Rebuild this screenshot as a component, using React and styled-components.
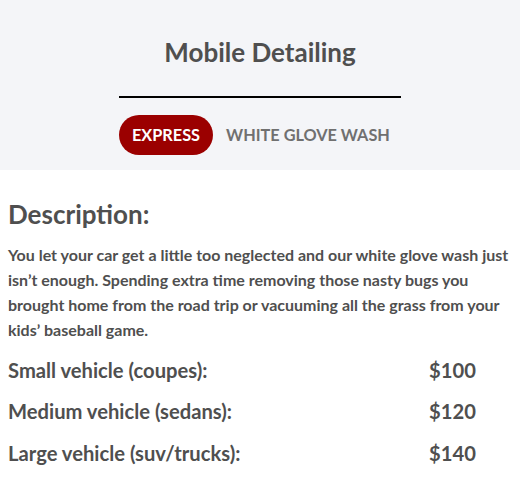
import React from 'react';
import styled, { createGlobalStyle } from 'styled-components';

const GlobalStyle = createGlobalStyle`
  body {
    margin: 0;
    background: #fff;
    font-family: Lato, 'Open Sans', sans-serif;
  }
`;

const prices = [
  { label: 'Small vehicle (coupes):', price: '$100' },
  { label: 'Medium vehicle (sedans):', price: '$120' },
  { label: 'Large vehicle (suv/trucks):', price: '$140' },
];

class App extends React.Component {
  constructor(props) {
    super(props);
    this.state = { active: 0 };
  }

  render() {
    const tabs = ['EXPRESS', 'WHITE GLOVE WASH'];
    return (
      <div>
        <GlobalStyle />
        <Header>
          <Title>Mobile Detailing</Title>
          <Divider />
          <Tabs>
            {tabs.map((t, i) => (
              <Tab key={t} active={i === this.state.active} onClick={() => this.setState({ active: i })}>
                {t}
              </Tab>
            ))}
          </Tabs>
        </Header>
        <Body>
          <Heading>Description:</Heading>
          <Text>
            You let your car get a little too neglected and our white glove wash just isn’t enough.
            Spending extra time removing those nasty bugs you brought home from the road trip or
            vacuuming all the grass from your kids’ baseball game.
          </Text>
          <PriceList>
            {prices.map((p) => (
              <PriceRow key={p.label}>
                <PriceLabel>{p.label}</PriceLabel>
                <PriceValue>{p.price}</PriceValue>
              </PriceRow>
            ))}
          </PriceList>
        </Body>
      </div>
    );
  }
}

const Header = styled.div`
  background: #f4f5f8;
  height: 170px;
  display: flex;
  flex-direction: column;
  align-items: center;
  padding-top: 34px;
  box-sizing: border-box;
`;

const Title = styled.h1`
  margin: 0;
  font-size: 26px;
  font-weight: 700;
  color: #4f4f4f;
  line-height: 36px;
`;

const Divider = styled.div`
  width: 282px;
  height: 2px;
  background: #000;
  margin-top: 26px;
`;

const Tabs = styled.div`
  width: 282px;
  display: flex;
  margin-top: 17px;
  white-space: nowrap;
`;

const Tab = styled.div`
  height: 40px;
  line-height: 40px;
  padding: 0 13px;
  border-radius: 20px;
  font-size: 16.3px;
  font-weight: 700;
  cursor: pointer;
  background: ${(p) => (p.active ? '#9b0000' : 'transparent')};
  color: ${(p) => (p.active ? '#fff' : '#707070')};
`;

const Body = styled.div`
  padding: 0 8px;
`;

const Heading = styled.h2`
  margin: 28px 0 0;
  font-size: 26px;
  font-weight: 700;
  color: #4f4f4f;
  line-height: 32px;
`;

const Text = styled.p`
  margin: 12px 0 0;
  font-size: 16px;
  font-weight: 700;
  line-height: 25px;
  color: #4f4f4f;
`;

const PriceList = styled.div`
  margin-top: 7px;
`;

const PriceRow = styled.div`
  display: grid;
  grid-template-columns: 421px auto;
  height: 41.5px;
  align-items: center;
`;

const PriceLabel = styled.div`
  font-size: 20.2px;
  font-weight: 700;
  color: #4f4f4f;
`;

const PriceValue = styled.div`
  font-size: 20.2px;
  font-weight: 700;
  color: #4f4f4f;
`;

export default App;
